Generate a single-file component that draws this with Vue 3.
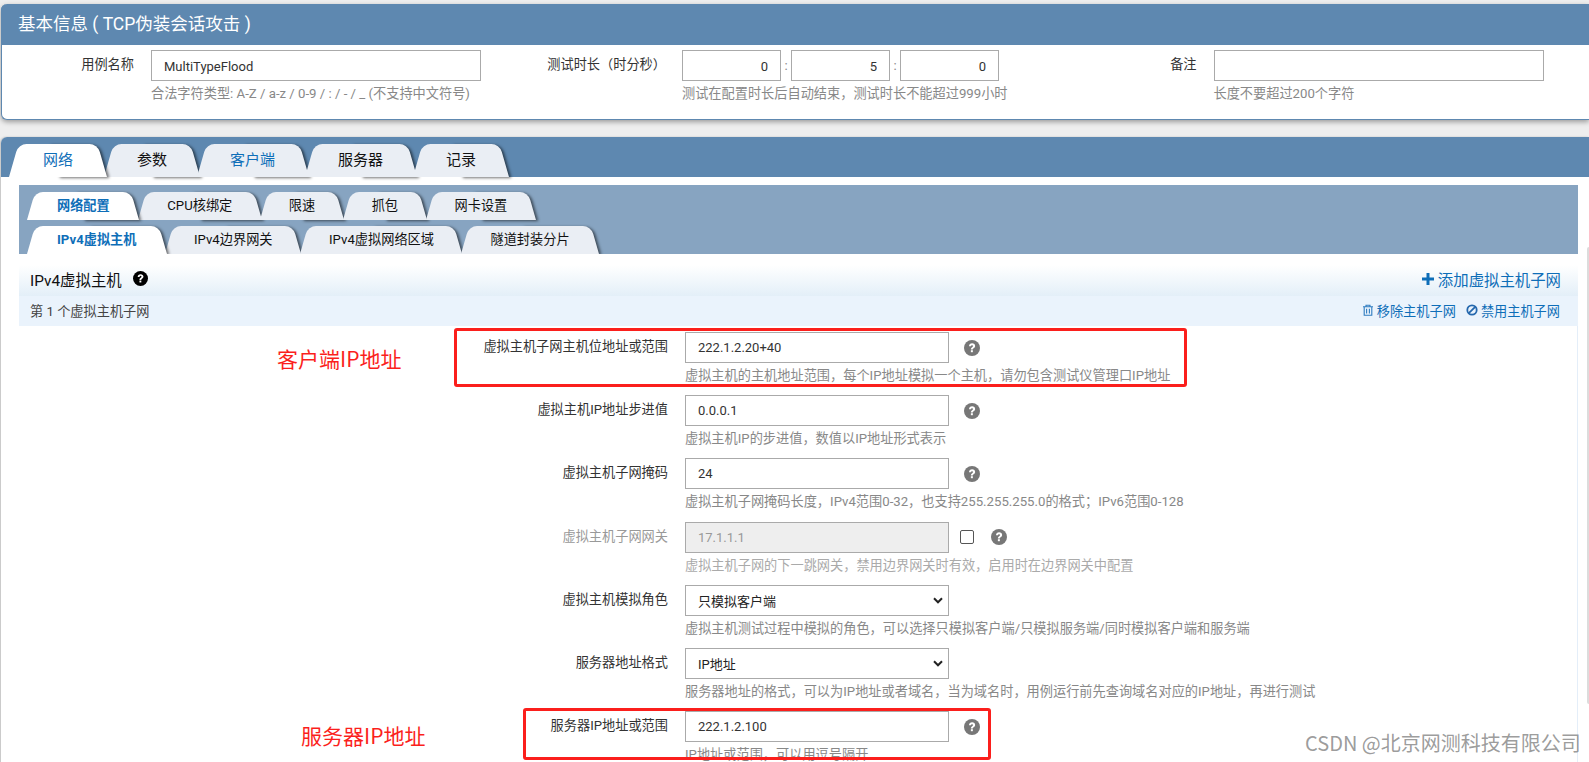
<script setup>
const mainTabs = [
  { text: '网络', active: true },
  { text: '参数' },
  { text: '客户端', link: true },
  { text: '服务器' },
  { text: '记录' }
]
const subTabs1 = [
  { text: '网络配置', active: true },
  { text: 'CPU核绑定' },
  { text: '限速' },
  { text: '抓包' },
  { text: '网卡设置' }
]
const subTabs2 = [
  { text: 'IPv4虚拟主机', active: true },
  { text: 'IPv4边界网关' },
  { text: 'IPv4虚拟网络区域' },
  { text: '隧道封装分片' }
]
const rows = [
  { label: '虚拟主机子网主机位地址或范围', value: '222.1.2.20+40', hint: '虚拟主机的主机地址范围，每个IP地址模拟一个主机，请勿包含测试仪管理口IP地址' },
  { label: '虚拟主机IP地址步进值', value: '0.0.0.1', hint: '虚拟主机IP的步进值，数值以IP地址形式表示' },
  { label: '虚拟主机子网掩码', value: '24', hint: '虚拟主机子网掩码长度，IPv4范围0-32，也支持255.255.255.0的格式；IPv6范围0-128' },
  { label: '虚拟主机子网网关', value: '17.1.1.1', hint: '虚拟主机子网的下一跳网关，禁用边界网关时有效，启用时在边界网关中配置', disabled: true },
  { label: '虚拟主机模拟角色', value: '只模拟客户端', hint: '虚拟主机测试过程中模拟的角色，可以选择只模拟客户端/只模拟服务端/同时模拟客户端和服务端', select: true },
  { label: '服务器地址格式', value: 'IP地址', hint: '服务器地址的格式，可以为IP地址或者域名，当为域名时，用例运行前先查询域名对应的IP地址，再进行测试', select: true },
  { label: '服务器IP地址或范围', value: '222.1.2.100', hint: 'IP地址或范围，可以用逗号隔开' }
]
</script>

<template>
  <div class="page">
    <section class="panel info">
      <h2 class="info-title">基本信息 ( TCP伪装会话攻击 )</h2>
      <div class="info-body">
        <div class="info-label l1">用例名称</div>
        <div class="info-field f1">
          <input class="text" value="MultiTypeFlood" readonly />
          <p class="hint">合法字符类型: A-Z / a-z / 0-9 / : / - / _ (不支持中文符号)</p>
        </div>
        <div class="info-label l2">测试时长（时分秒）</div>
        <div class="info-field f2">
          <div class="time">
            <input class="text num" value="0" readonly /><span class="colon">:</span>
            <input class="text num" value="5" readonly /><span class="colon">:</span>
            <input class="text num" value="0" readonly />
          </div>
          <p class="hint">测试在配置时长后自动结束，测试时长不能超过999小时</p>
        </div>
        <div class="info-label l3">备注</div>
        <div class="info-field f3">
          <input class="text" readonly />
          <p class="hint">长度不要超过200个字符</p>
        </div>
      </div>
    </section>

    <section class="panel main">
      <nav class="tabs main-tabs">
        <div v-for="t in mainTabs" :key="t.text" class="tab" :class="{ active: t.active, link: t.link }">{{ t.text }}</div>
      </nav>
      <div class="content">
        <div class="subbar">
          <nav class="tabs sub-tabs">
            <div v-for="t in subTabs1" :key="t.text" class="tab" :class="{ active: t.active }">{{ t.text }}</div>
          </nav>
          <nav class="tabs sub-tabs">
            <div v-for="t in subTabs2" :key="t.text" class="tab" :class="{ active: t.active }">{{ t.text }}</div>
          </nav>
        </div>
        <div class="sec-head">
          <span class="sec-title">IPv4虚拟主机</span>
          <svg class="q-black" viewBox="0 0 24 24"><circle cx="12" cy="12" r="12" fill="#000"/><path d="M7.500 9.400C7.500 6.700 9.600 5 12.200 5c2.600 0 4.500 1.600 4.500 3.900 0 1.800-1 2.600-2.200 3.400-.9.600-1.200 1-1.200 1.900h-3c0-1.900.7-2.700 1.900-3.500 1-.7 1.400-1.100 1.400-1.700 0-.8-.6-1.300-1.500-1.300-1 0-1.600.6-1.600 1.700H7.500z" fill="#fff"/><rect x="10.300" y="15.300" width="3" height="3" fill="#fff"/></svg>
          <a class="add"><svg class="plus" viewBox="0 0 12 12"><path d="M4.500 0h3v4.500H12v3H7.500V12h-3V7.500H0v-3h4.500z" fill="#0e6eb8"/></svg>添加虚拟主机子网</a>
        </div>
        <div class="sec-sub">
          <span>第 1 个虚拟主机子网</span>
          <div class="sub-actions">
            <a><svg class="ic" viewBox="0 0 12 12" fill="none" stroke="#2f7cc0" stroke-width="1.100"><path d="M1 2.800h10M4 2.800V1.300h4v1.500M2.200 2.800v8.400h7.600V2.800M4.600 4.800v4.600M7.400 4.800v4.600"/></svg>移除主机子网</a>
            <a><svg class="ic" viewBox="0 0 12 12" fill="none" stroke="#2467ad" stroke-width="1.800"><circle cx="6" cy="6" r="4.700"/><path d="M2.800 9.200l6.400-6.400"/></svg>禁用主机子网</a>
          </div>
        </div>
        <div class="form">
          <div v-for="r in rows" :key="r.label" class="row" :class="{ off: r.disabled }">
            <label class="row-label">{{ r.label }}</label>
            <div class="row-field">
              <div class="row-ctl">
                <div v-if="r.select" class="select">
                  <span>{{ r.value }}</span>
                  <svg class="chev" viewBox="0 0 10 7"><path d="M1 1.300l4 4 4-4" fill="none" stroke="#222" stroke-width="2"/></svg>
                </div>
                <input v-else class="text wide" :class="{ dis: r.disabled }" :value="r.value" readonly />
                <span v-if="r.disabled" class="check"></span>
                <svg v-if="!r.select" class="q" viewBox="0 0 24 24"><circle cx="12" cy="12" r="12" fill="#777"/><path d="M7.500 9.400C7.500 6.700 9.600 5 12.200 5c2.600 0 4.500 1.600 4.500 3.900 0 1.800-1 2.600-2.200 3.400-.9.600-1.200 1-1.200 1.900h-3c0-1.900.7-2.700 1.900-3.500 1-.7 1.400-1.100 1.400-1.700 0-.8-.6-1.300-1.500-1.300-1 0-1.600.6-1.600 1.700H7.500z" fill="#fff"/><rect x="10.300" y="15.300" width="3" height="3" fill="#fff"/></svg>
              </div>
              <p class="hint">{{ r.hint }}</p>
            </div>
          </div>
        </div>
      </div>
    </section>

    <div class="scroll"></div>
    <div class="mark box1"></div>
    <div class="mark box2"></div>
    <div class="note n1">客户端IP地址</div>
    <div class="note n2">服务器IP地址</div>
    <div class="water">CSDN @北京网测科技有限公司</div>
  </div>
</template>

<style>
html, body { margin: 0; padding: 0; background: #eeeeee; overflow: hidden; }
</style>

<style scoped>
.page {
  position: relative;
  width: 1589px;
  height: 762px;
  overflow: hidden;
  padding-top: 4px;
  box-sizing: border-box;
  font-family: Roboto, "Noto Sans CJK SC", sans-serif;
  font-size: 13.2px;
  color: #333;
}
.panel { margin-left: 1px; background: #fff; border-radius: 6px 0 0 6px; }
.info {
  height: 116px;
  border-bottom: 1px solid #5e88b0;
  box-sizing: border-box;
  box-shadow: 0 2px 5px rgba(0, 0, 0, .35);
  border-left: 1px solid #5e88b0;
}
.info-title {
  margin: 0 0 5px -1px;
  height: 41px;
  padding-left: 17px;
  background: #5e88b0;
  color: #fff;
  font-size: 17.5px;
  font-weight: 400;
  line-height: 41px;
  border-radius: 6px 0 0 0;
}
.info-body { display: flex; align-items: flex-start; }
.info-label { line-height: 30px; text-align: right; color: #333; flex: none; }
.l1 { width: 132px; }
.l2 { width: 185px; }
.l3 { width: 197.5px; }
.info-field { flex: none; }
.f1 { width: 330px; margin-left: 17px; }
.f2 { width: 317px; margin-left: 16px; }
.f3 { width: 330px; margin-left: 17px; }
.text {
  display: block;
  width: 100%;
  height: 31px;
  box-sizing: border-box;
  border: 1px solid #aaa;
  background: #fff;
  padding: 0 12px;
  font: 13px Roboto, "Noto Sans CJK SC", sans-serif;
  color: #333;
  outline: none;
}
.info .text { padding-top: 2px; }
.time { display: flex; align-items: center; }
.num { width: 99px; text-align: right; }
.colon { width: 11px; text-align: center; color: #888; }
.hint {
  margin: 5px 0 0;
  font-size: 13.2px;
  line-height: 16px;
  color: #888;
  white-space: nowrap;
}

.main {
  margin-top: 17px;
  background: #fff;
  box-shadow: -1px 0 2px rgba(0, 0, 0, .2);
  height: 700px;
  border-radius: 6px 0 0 0;
}
.main-tabs {
  height: 33px;
  padding: 7px 0 0 8px;
  background: #5e88b0;
  border-radius: 6px 0 0 0;
}
.tabs { display: flex; align-items: flex-end; }
.tab {
  position: relative;
  isolation: isolate;
  flex: none;
  text-align: center;
  color: #111;
  white-space: nowrap;
}
.tab::before, .tab::after {
  content: "";
  position: absolute;
  top: 0;
  bottom: 0;
  z-index: -1;
  background: #eaeef4;
}
.tab::before {
  left: 50%;
  right: 0;
  transform: skewX(16deg);
  transform-origin: bottom;
  border-top-right-radius: 8px;
  box-shadow: 2px 1px 3px rgba(0, 0, 0, .55);
}
.tab::after {
  left: 0;
  right: 50%;
  transform: skewX(-16deg);
  transform-origin: bottom;
  border-top-left-radius: 8px;
}
.tab.active { z-index: 2; color: #0e6eb8; }
.tab.active::before, .tab.active::after { background: #fff; }
.tab.link { color: #0e6eb8; }
.main-tabs .tab {
  height: 33px;
  line-height: 33px;
  padding: 0 33px;
  margin-right: -3px;
  font-size: 15px;
}
.main-tabs .tab.active { padding: 0 34px; }
.content { margin-left: 18px; padding-top: 8px; width: 1559px; }
.subbar {
  height: 69px;
  background: #87a4c1;
  box-sizing: border-box;
  padding: 7px 0 0 8px;
  overflow: hidden;
}
.sub-tabs + .sub-tabs { margin-top: 6px; }
.sub-tabs .tab {
  height: 28px;
  line-height: 28px;
  padding: 0 29px;
  margin-right: -1.5px;
  font-size: 13.2px;
}
.sub-tabs .tab.active { padding: 0 30px; font-weight: 700; }
.sec-head {
  margin-top: 11px;
  height: 31px;
  display: flex;
  align-items: center;
  padding: 0 17px 4px 11px;
  box-sizing: border-box;
  background: linear-gradient(#fff, #e3eff8);
  font-size: 15.4px;
  color: #111;
}
.sec-title { color: #111; }
.q-black { width: 15px; height: 15px; margin-left: 11px; }
.add { margin-left: auto; color: #0e6eb8; font-size: 15.4px; display: flex; align-items: center; }
.plus { width: 12px; height: 12px; margin-right: 4px; }
.sec-sub {
  height: 30px;
  display: flex;
  align-items: center;
  justify-content: space-between;
  padding: 0 18px 2px 11px;
  box-sizing: border-box;
  background: #eaf3fc;
  font-size: 13.2px;
  color: #444;
}
.sub-actions { display: flex; gap: 10px; color: #0e6eb8; }
.sub-actions a { display: flex; align-items: center; }
.ic { width: 12px; height: 12px; margin-right: 3px; }
.form { padding-top: 6px; border-right: 1px solid #e4eef9; }
.row {
  display: grid;
  grid-template-columns: 649px 1fr;
  column-gap: 17px;
  height: 63.2px;
}
.row-label { text-align: right; line-height: 30px; color: #333; }
.row.off .row-label { color: #999; }
.row.off .hint { color: #aaa; }
.row-ctl { display: flex; align-items: center; }
.wide { width: 264px; }
.dis { background: #eee; color: #999; }
.select {
  width: 264px;
  height: 31px;
  box-sizing: border-box;
  border: 1px solid #aaa;
  padding: 0 5px 0 12px;
  display: flex;
  align-items: center;
  justify-content: space-between;
  color: #222;
  font-size: 13px;
}
.chev { width: 10px; height: 7px; }
.q { width: 16px; height: 16px; margin-left: 15px; flex: none; }
.check {
  width: 12px;
  height: 12px;
  border: 1px solid #555;
  border-radius: 2px;
  margin-left: 11px;
  background: #fff;
  flex: none;
}
.check + .q { margin-left: 17px; }
.scroll {
  position: absolute;
  left: 1587px;
  top: 247px;
  width: 2px;
  height: 457px;
  background: #dcdcdc;
  border-radius: 2px 0 0 2px;
}
.mark {
  position: absolute;
  border: 3px solid #fb1f1c;
  border-radius: 3px;
  box-sizing: border-box;
}
.box1 { left: 454px; top: 328px; width: 733px; height: 59px; }
.box2 { left: 523px; top: 708px; width: 468px; height: 52px; }
.note {
  position: absolute;
  color: #fb1f1c;
  font-size: 21px;
  line-height: 28px;
  font-family: "Noto Sans CJK SC", sans-serif;
}
.n1 { left: 277px; top: 344px; }
.n2 { left: 301px; top: 721px; }
.water {
  position: absolute;
  left: 1305px;
  top: 731px;
  font-size: 20px;
  line-height: 24px;
  color: rgba(130, 130, 130, .8);
  font-family: "Noto Sans CJK SC", sans-serif;
  white-space: nowrap;
}
</style>
